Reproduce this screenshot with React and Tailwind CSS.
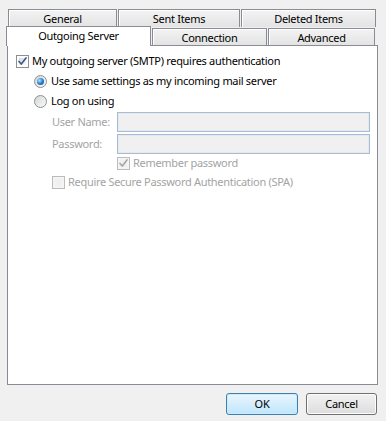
import React from 'react';

const font = { fontFamily: '"Noto Sans", "Open Sans", sans-serif', letterSpacing: '-0.3px' };

const Tab = ({ label, width, selected }) => {
    if (selected) {
        return (
            <div
                className={`relative z-10 self-start h-[20px] ${width} bg-white border border-b-0 border-[#898c95] flex items-center justify-center text-[11px] text-black whitespace-nowrap`}
            >
                {label}
            </div>
        );
    }
    return (
        <div
            className={`h-[17px] ${width} border border-b-0 border-[#898c95] bg-gradient-to-b from-[#f3f3f3] to-[#e3e3e3] flex items-center justify-center text-[11px] text-black leading-none whitespace-nowrap shadow-[inset_1px_1px_0_#ffffff]`}
        >
            {label}
        </div>
    );
};

const BackTab = ({ label, width }) => (
    <div
        className={`h-[18px] ${width} border border-b-0 border-[#898c95] bg-gradient-to-b from-[#f3f3f3] to-[#e3e3e3] flex items-center justify-center text-[11px] text-black leading-none whitespace-nowrap shadow-[inset_1px_1px_0_#ffffff]`}
    >
        {label}
    </div>
);

const Checkbox = ({ checked, disabled }) => (
    <div
        className={`relative w-[13px] h-[13px] shrink-0 border ${disabled ? 'border-[#bcbcbc] bg-[#f4f4f4]' : 'border-[#8e8f8f] bg-white'}`}
    >
        <div
            className={`absolute inset-[2px] ${disabled ? 'bg-[#f0f0f0]' : 'bg-gradient-to-br from-[#d9dadb] to-[#fbfbfb]'}`}
        />
        {checked && (
            <svg className="absolute inset-0" width="11" height="11" viewBox="0 0 11 11">
                <path
                    d="M2 5.5 L4.3 8 L9 2"
                    fill="none"
                    stroke={disabled ? '#a8a8a8' : '#3d5c97'}
                    strokeWidth="1.7"
                    strokeLinecap="round"
                    strokeLinejoin="round"
                />
            </svg>
        )}
    </div>
);

const Radio = ({ checked }) => (
    <div className="relative w-[13px] h-[13px] shrink-0 rounded-full border border-[#8e8f8f] bg-gradient-to-br from-[#d4d5d6] to-[#fbfbfb] flex items-center justify-center">
        {checked && (
            <div className="w-[7px] h-[7px] rounded-full bg-[radial-gradient(circle_at_35%_35%,#b4e6ff_0%,#2f8ad6_45%,#0e3f78_100%)]" />
        )}
    </div>
);

const Field = ({ label }) => (
    <div className="flex items-center pl-[44px] pr-[7px] h-[20px]">
        <div className="w-[65px] shrink-0 whitespace-nowrap text-[#a3a3a3]">{label}</div>
        <div className="flex-1 h-[20px] border border-[#abbbcf] bg-[#f0f0f0] shadow-[inset_0_0_0_1px_#e4eaf1]" />
    </div>
);

export default function App() {
    return (
        <div className="w-[386px] h-[421px] bg-[#f0f0f0] flex flex-col overflow-hidden select-none" style={font}>
            {/* back row of tabs */}
            <div className="flex gap-[1px] mt-[9px] ml-[8px]">
                <BackTab label="General" width="w-[109px]" />
                <BackTab label="Sent Items" width="w-[122px]" />
                <BackTab label="Deleted Items" width="w-[135px]" />
            </div>
            {/* front row of tabs */}
            <div className="flex items-end -mt-[1px] h-[19px] ml-[6px]">
                <Tab label="Outgoing Server" width="w-[145px]" selected />
                <div className="w-[1px]" />
                <Tab label="Connection" width="w-[115px]" />
                <div className="w-[1px]" />
                <Tab label="Advanced" width="w-[107px]" />
            </div>

            {/* panel */}
            <div className="ml-[7px] w-[371px] h-[340px] bg-white border border-[#898c95] pt-[5px] text-[11px] text-black whitespace-nowrap">
                <div className="flex items-center gap-[3px] pl-[8px] h-[20px]">
                    <Checkbox checked />
                    <span>My outgoing server (SMTP) requires authentication</span>
                </div>
                <div className="flex items-center gap-[4px] pl-[26px] h-[20px]">
                    <Radio checked />
                    <span>Use same settings as my incoming mail server</span>
                </div>
                <div className="flex items-center gap-[4px] pl-[26px] h-[20px]">
                    <Radio />
                    <span>Log on using</span>
                </div>
                <div className="flex flex-col gap-[2px] mt-[1px]">
                    <Field label="User Name:" />
                    <Field label="Password:" />
                </div>
                <div className="flex items-center gap-[3px] pl-[109px] h-[18px]">
                    <Checkbox checked disabled />
                    <span className="text-[#a3a3a3]">Remember password</span>
                </div>
                <div className="flex items-center gap-[3px] pl-[44px] h-[20px]">
                    <Checkbox disabled />
                    <span className="text-[#a3a3a3]">Require Secure Password Authentication (SPA)</span>
                </div>
            </div>

            {/* buttons */}
            <div className="flex justify-end gap-[8px] mt-[8px] pr-[9px]">
                <button className="w-[72px] h-[22px] rounded-[3px] border border-[#3c7fb1] bg-gradient-to-b from-[#eaf6fd] to-[#bee6fd] text-[11px] text-black shadow-[inset_0_0_0_1px_#cdebfb]">
                    OK
                </button>
                <button className="w-[71px] h-[22px] rounded-[3px] border border-[#707070] bg-gradient-to-b from-[#f2f2f2] to-[#dddddd] text-[11px] text-black shadow-[inset_0_0_0_1px_#fcfcfc]">
                    Cancel
                </button>
            </div>
        </div>
    );
}
